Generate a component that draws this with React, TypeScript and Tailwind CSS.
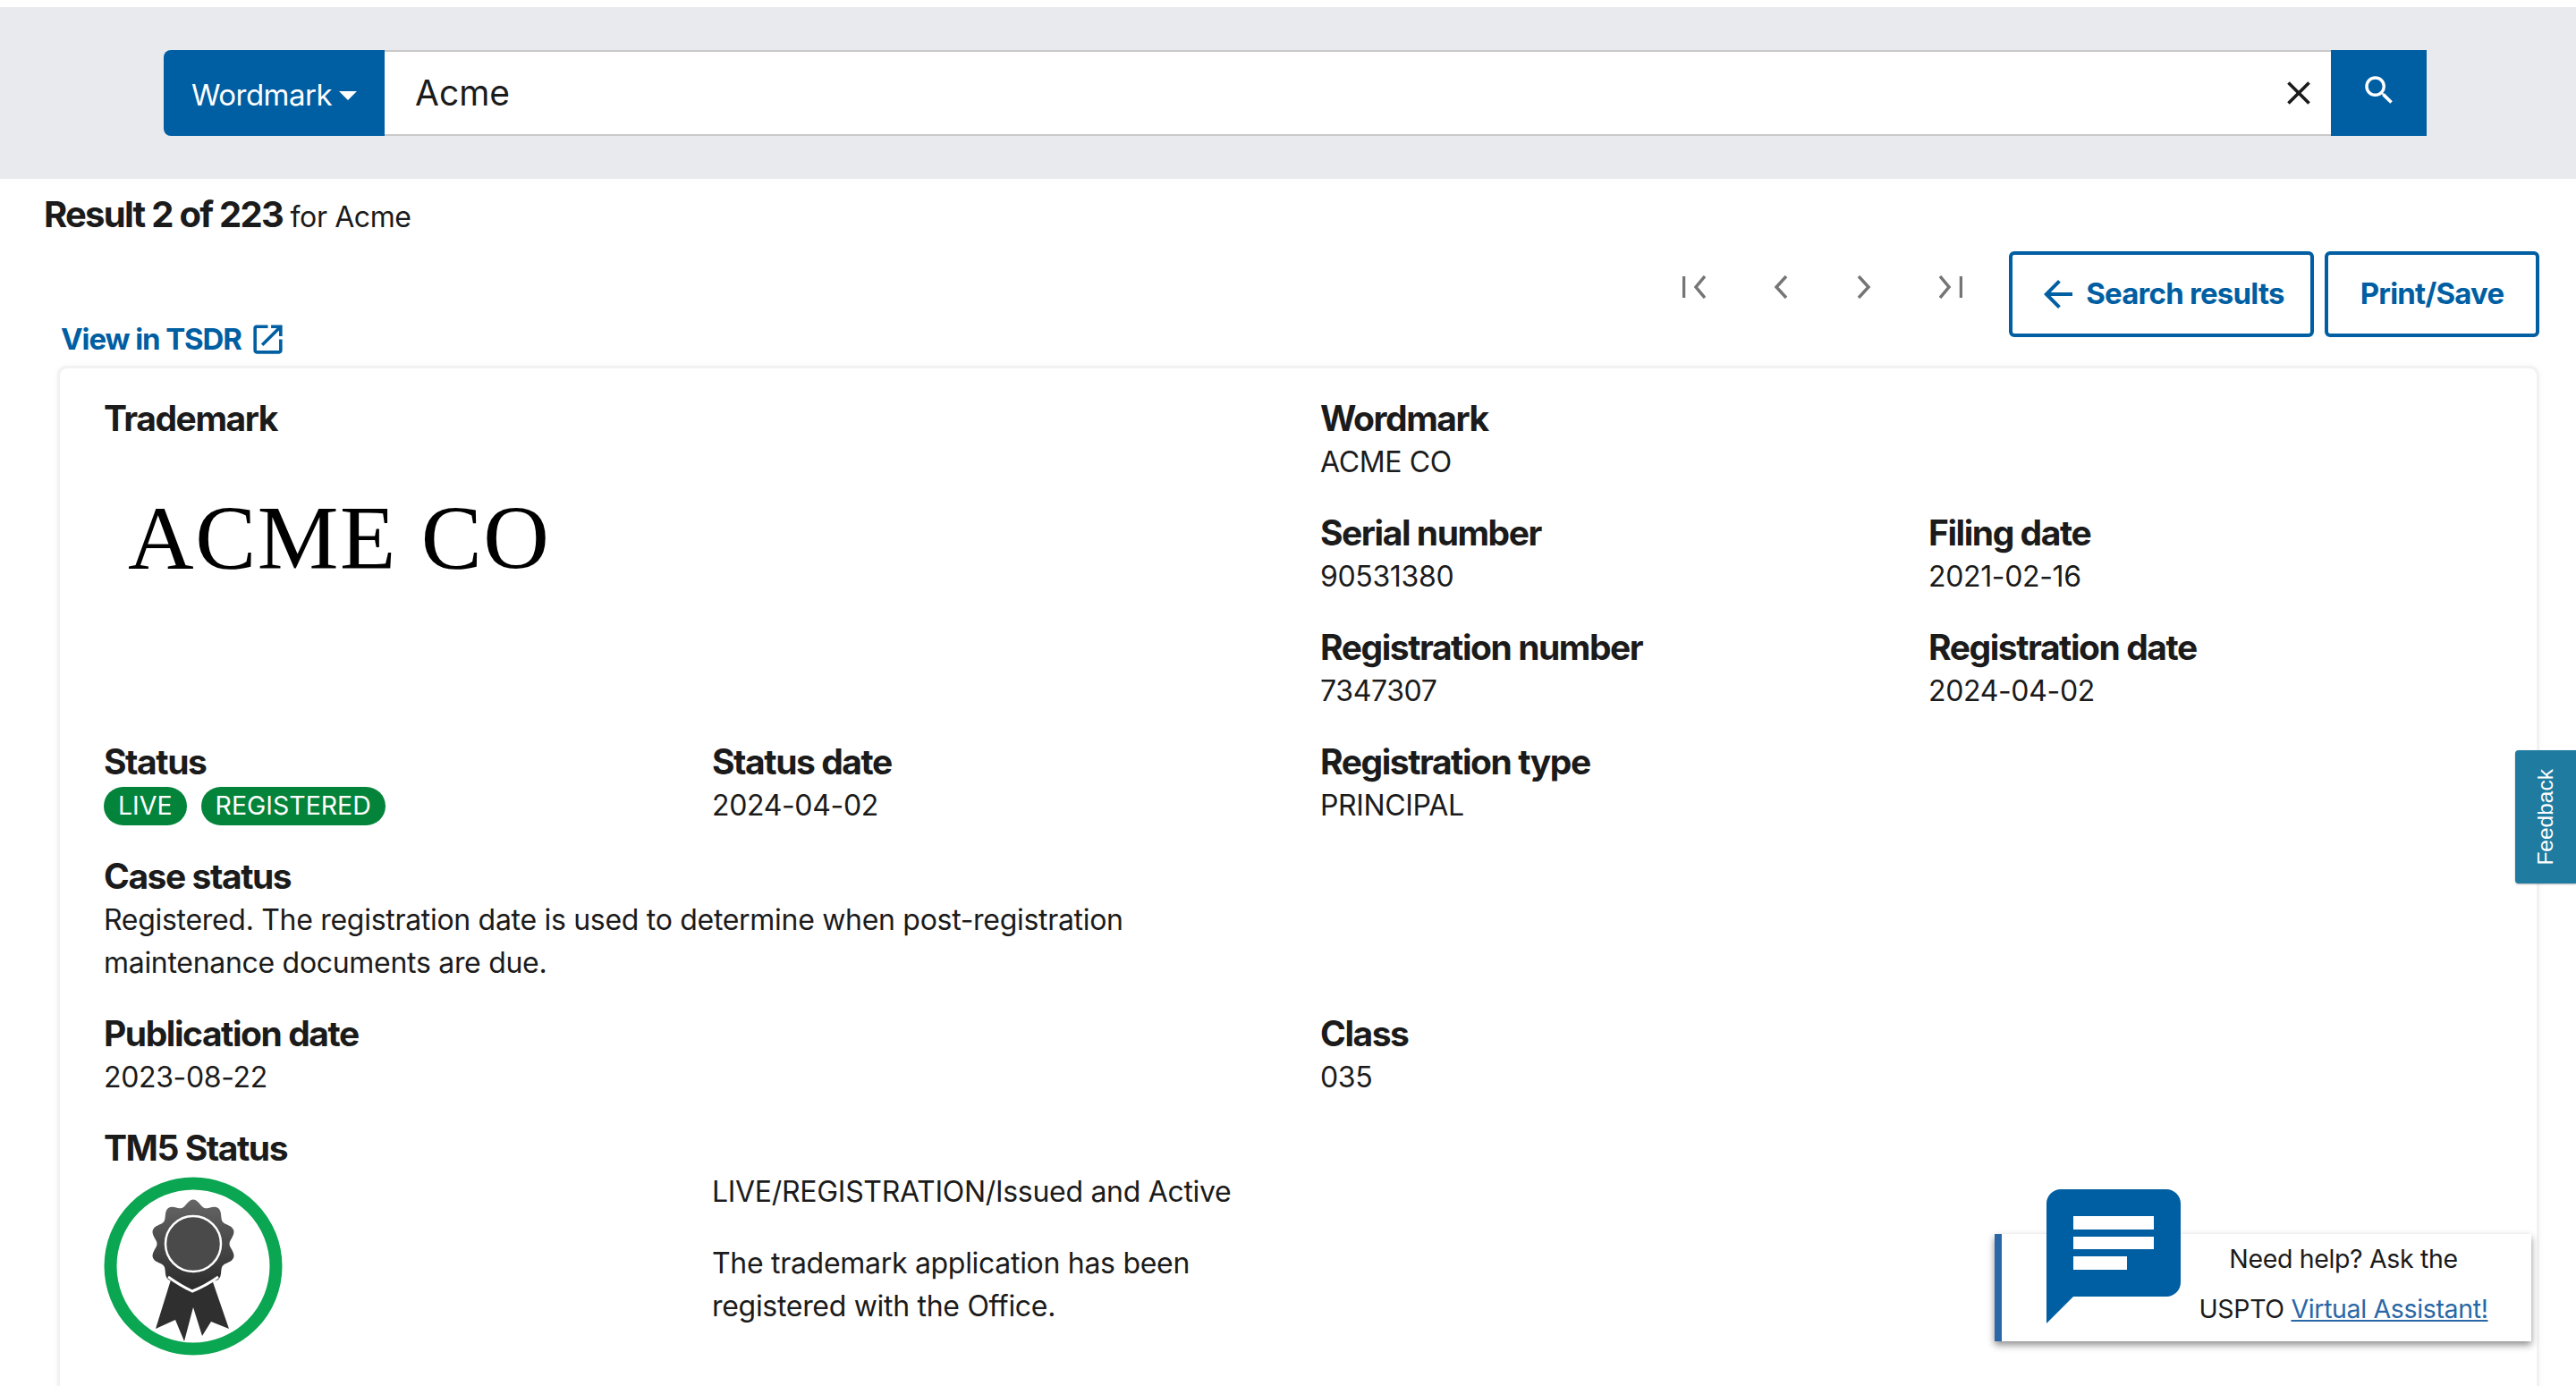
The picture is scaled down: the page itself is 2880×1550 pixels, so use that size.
const fontStack = "font-['Inter','Liberation_Sans',sans-serif]";

function Field({
  label,
  value,
  className,
}: {
  label: string;
  value?: string;
  className?: string;
}) {
  return (
    <div className={className}>
      <Label>{label}</Label>
      {value && <p className="text-[32px] leading-[48px] tracking-[-0.35px]">{value}</p>}
    </div>
  );
}

function Label({ children }: { children: React.ReactNode }) {
  return (
    <h3 className="h-[49px] text-[39px] leading-[48px] font-bold tracking-[-1.45px]">{children}</h3>
  );
}

function Pill({ children }: { children: React.ReactNode }) {
  return (
    <span className="flex h-[43px] items-center rounded-full bg-[#04843b] px-4 text-[28.5px] leading-none text-white">
      {children}
    </span>
  );
}

function Rosette() {
  // scalloped seal outline, ten lobes
  const pts: string[] = [];
  for (let i = 0; i <= 180; i++) {
    const a = (i / 180) * Math.PI * 2;
    const r = 44 + 3.5 * Math.cos(a * 10);
    pts.push(`${(100 + r * Math.sin(a)).toFixed(1)} ${(75 - r * Math.cos(a) * 1.04).toFixed(1)}`);
  }
  return (
    <svg width="200" height="200" viewBox="0 0 200 200">
      <defs>
        <linearGradient id="seal" x1="0" y1="0" x2="0" y2="1">
          <stop offset="0" stopColor="#666" />
          <stop offset="1" stopColor="#2c2c2c" />
        </linearGradient>
      </defs>
      <circle cx="100" cy="100" r="92.5" fill="none" stroke="#0aa651" strokeWidth="14" />
      <path d="M76 112 L58 170 L80 160 L90 184 L100 146 L110 178 L120 162 L140 170 L120 112 Z" fill="#2f2f2f" />
      <path d={`M${pts.join(" L")} Z`} fill="url(#seal)" />
      <path d="M72 112 Q86 122 99 128 Q114 122 128 112" fill="none" stroke="#fff" strokeWidth="3" />
      <circle cx="100" cy="75" r="31" fill="#4a4a4a" stroke="#fff" strokeWidth="2.5" />
    </svg>
  );
}

export default function App() {
  return (
    <div className={`${fontStack} relative h-[1550px] overflow-hidden bg-white pt-2 text-[#1b1b1b]`}>
      <header className="flex h-[192px] items-center bg-[#e9eaee] pr-[167px] pl-[183px]">
        <button className="flex h-24 w-[247px] items-center justify-center gap-2 rounded-l-[8px] bg-[#005ea2] pt-[5px] text-[33px] tracking-[-0.5px] text-white">
          Wordmark
          <span className="h-0 w-0 border-x-[10px] border-t-[10px] border-x-transparent border-t-white" />
        </button>
        <div className="flex h-24 flex-1 items-center justify-between border-y-2 border-[#c9c9c9] bg-white pr-[14px] pl-[34px]">
          <span className="text-[39px]">Acme</span>
          <svg width="44" height="44" viewBox="0 0 24 24" fill="#1b1b1b">
            <path d="M19 6.41 17.59 5 12 10.59 6.41 5 5 6.41 10.59 12 5 17.59 6.41 19 12 13.41 17.59 19 19 17.59 13.41 12z" />
          </svg>
        </div>
        <button className="flex h-24 w-[107px] items-center justify-center bg-[#005ea2]">
          <svg width="42" height="42" viewBox="0 0 24 24" fill="#fff" className="-mt-[6px]">
            <path d="M15.5 14h-.79l-.28-.27A6.471 6.471 0 0 0 16 9.5 6.5 6.5 0 1 0 9.5 16c1.61 0 3.09-.59 4.23-1.57l.27.28v.79l5 4.99L20.49 19l-4.99-5zm-6 0C7.01 14 5 11.99 5 9.5S7.01 5 9.5 5 14 7.01 14 9.5 11.99 14 9.5 14z" />
          </svg>
        </button>
      </header>

      <p className="mt-4 h-[48px] pl-[49px] text-[32px] leading-[48px] tracking-[-0.4px]">
        <span className="text-[40px] font-bold tracking-[-1.75px]">Result 2 of 223</span> for Acme
      </p>

      <div className="mt-[17px] flex items-end justify-between pr-[41px] pl-[68px]">
        <a className="-mb-[24px] flex items-center gap-[12px] text-[33px] leading-[44px] font-bold tracking-[-1.1px] text-[#005ea2]">
          View in TSDR
          <svg width="43" height="43" viewBox="0 0 24 24" fill="#005ea2" className="-ml-1">
            <path d="M19 19H5V5h7V3H5a2 2 0 0 0-2 2v14c0 1.1.9 2 2 2h14c1.1 0 2-.9 2-2v-7h-2v7zM14 3v2h3.59l-9.83 9.83 1.41 1.41L19 6.41V10h2V3h-7z" />
          </svg>
        </a>
        <div className="flex items-start gap-3">
          <div className="mt-[27px] mr-[40px] flex w-[313px] items-center justify-between text-[#757575]">
            <svg width="26" height="26" viewBox="0 0 26 26" fill="none" stroke="currentColor" strokeWidth="3.5">
              <path d="M1.5 1v24M25 1 15 13l10 12" />
            </svg>
            <svg width="18" height="26" viewBox="0 0 18 26" fill="none" stroke="currentColor" strokeWidth="3.5">
              <path d="M15 1 4 13l11 12" />
            </svg>
            <svg width="18" height="26" viewBox="0 0 18 26" fill="none" stroke="currentColor" strokeWidth="3.5">
              <path d="m3 1 11 12L3 25" />
            </svg>
            <svg width="26" height="26" viewBox="0 0 26 26" fill="none" stroke="currentColor" strokeWidth="3.5">
              <path d="M24.5 1v24M1 1l10 12L1 25" />
            </svg>
          </div>
          <button className="flex h-24 w-[341px] items-center justify-center gap-[7px] rounded-[6px] border-4 border-[#005ea2] text-[33px] font-bold tracking-[-0.75px] text-[#005ea2]">
            <svg width="48" height="48" viewBox="0 0 24 24" fill="#005ea2" className="-ml-[2px]">
              <path d="M20 11H7.83l5.59-5.59L12 4l-8 8 8 8 1.41-1.41L7.83 13H20v-2z" />
            </svg>
            Search results
          </button>
          <button className="h-24 w-[240px] rounded-[6px] border-4 border-[#005ea2] text-[33px] font-bold tracking-[-0.8px] text-[#005ea2]">
            Print/Save
          </button>
        </div>
      </div>

      <main className="mt-[35px] mr-[44px] ml-[67px] rounded-[8px] pt-8 pb-[60px] pl-[49px] shadow-[0_0_0_3px_#f2f2f2,0_0_6px_4px_rgba(0,0,0,0.03)]">
        <div className="grid grid-cols-[680px_680px_680px_680px] gap-y-[31px]">
          <div className="col-span-2 row-span-3">
            <Label>Trademark</Label>
            <p className="mt-[49px] pl-[27px] font-['Liberation_Serif',serif] text-[102px] leading-[120px] tracking-[1.5px] text-black">
              ACME CO
            </p>
          </div>
          <Field className="col-span-2" label="Wordmark" value="ACME CO" />
          <Field label="Serial number" value="90531380" />
          <Field label="Filing date" value="2021-02-16" />
          <Field label="Registration number" value="7347307" />
          <Field label="Registration date" value="2024-04-02" />

          <div>
            <Label>Status</Label>
            <div className="mt-[3px] flex gap-4">
              <Pill>LIVE</Pill>
              <Pill>REGISTERED</Pill>
            </div>
          </div>
          <Field label="Status date" value="2024-04-02" />
          <Field className="col-span-2" label="Registration type" value="PRINCIPAL" />

          <div className="col-span-4 pr-[1360px]">
            <Label>Case status</Label>
            <p className="pr-[60px] text-[32px] leading-[48px] tracking-[-0.3px]">
              Registered. The registration date is used to determine when post-registration maintenance documents are due.
            </p>
          </div>

          <Field className="col-span-2" label="Publication date" value="2023-08-22" />
          <Field className="col-span-2" label="Class" value="035" />

          <div>
            <Label>TM5 Status</Label>
            <div className="mt-[7px]">
              <Rosette />
            </div>
          </div>
          <div className="col-span-2 pt-[49px] text-[32px] leading-[48px] tracking-[-0.3px]">
            <p>LIVE/REGISTRATION/Issued and Active</p>
            <p className="mt-8 w-[600px]">The trademark application has been registered with the Office.</p>
          </div>
        </div>
      </main>

      {/* feedback tab */}
      <div className="absolute top-[839px] right-0 flex h-[149px] w-[68px] items-center justify-center rounded-l-[4px] bg-[#207ba0] shadow-[0_1px_2px_rgba(0,0,0,0.3)]">
        <span className="rotate-180 font-['Liberation_Sans',sans-serif] text-[24.5px] leading-none text-white [writing-mode:vertical-rl]">
          Feedback
        </span>
      </div>

      {/* virtual assistant */}
      <div className="absolute top-[1380px] left-[2230px] flex h-[120px] w-[600px] flex-col items-center justify-center border-l-8 border-[#2a67a6] bg-white pb-2 pl-[172px] text-[28.5px] leading-[56px] tracking-[-0.35px] shadow-[0_4px_8px_rgba(0,0,0,0.45)]">
        <p>Need help? Ask the</p>
        <p>
          USPTO <a className="text-[#2a67a6] underline">Virtual Assistant!</a>
        </p>
      </div>
      <svg className="absolute top-[1330px] left-[2288px]" width="150" height="150" viewBox="0 0 150 150">
        <path d="M16 0h118a16 16 0 0 1 16 16v88a16 16 0 0 1-16 16H30L0 150V16A16 16 0 0 1 16 0z" fill="#005ea2" />
        <path d="M30 30h90v15H30zM30 53h90v14H30zM30 75h60v15H30z" fill="#fff" />
      </svg>
    </div>
  );
}
